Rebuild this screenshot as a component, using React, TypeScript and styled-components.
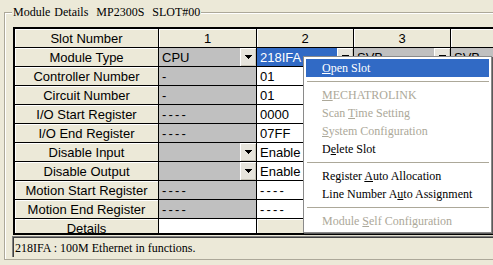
import React from 'react';
import styled, { createGlobalStyle } from 'styled-components';

const GlobalStyle = createGlobalStyle`
  html, body { margin: 0; padding: 0; background: #ECE9D8; overflow: hidden; }
  #root { width: 493px; height: 265px; }
`;

const Page = styled.div`
  position: relative;
  width: 493px;
  height: 265px;
  overflow: hidden;
  background: #ECE9D8;
  padding-top: 5px;
  box-sizing: border-box;
`;

const GroupBox = styled.fieldset`
  margin: 0 0 0 4px;
  padding: 0 0 2px 7px;
  width: 560px;
  min-width: 0;
  border: 1px solid #ACA899;
  box-shadow: inset 1px 1px 0 #fff;
  box-sizing: border-box;
`;

const Legend = styled.legend`
  padding: 0 1px;
  font-family: 'Liberation Serif', serif;
  font-size: 12px;
  line-height: 14px;
  white-space: pre;
  word-spacing: 1px;
  color: #000;
  background: #ECE9D8;
`;

const Viewport = styled.div`
  margin: 8px 0 0 1px;
  height: 205px;
  overflow: hidden;
  border-top: 1px solid #000;
  border-left: 1px solid #000;
  border-bottom: 2px solid #000;
`;

const Grid = styled.div`
  display: grid;
  grid-template-columns: 143px 97px 96px 96px 96px;
  grid-auto-rows: 18px;
  gap: 1px;
  padding: 1px;
  background: #000;
  width: max-content;
  font-family: 'Liberation Sans', Arial, sans-serif;
  font-size: 13px;
  color: #000;
`;

const LabelCell = styled.div`
  background: #ECE9D8;
  box-shadow: inset 1px 1px 0 #fff;
  text-align: center;
  line-height: 19px;
  white-space: nowrap;
  overflow: hidden;
`;

type Tone = 'grey' | 'white' | 'button';

const DataCell = styled.div<{ $tone: Tone }>`
  display: flex;
  overflow: hidden;
  background: ${(p) => (p.$tone === 'grey' ? '#C0C0C0' : p.$tone === 'white' ? '#FFFFFF' : '#ECE9D8')};
  box-shadow: ${(p) => (p.$tone === 'button' ? 'inset 1px 1px 0 #fff' : 'none')};
  justify-content: ${(p) => (p.$tone === 'button' ? 'center' : 'flex-start')};
`;

const CellText = styled.div<{ $selected?: boolean; $dashes?: boolean }>`
  flex: 1;
  padding-left: 3px;
  line-height: 19px;
  white-space: nowrap;
  overflow: hidden;
  letter-spacing: ${(p) => (p.$dashes ? '2.2px' : '0')};
  background: ${(p) => (p.$selected ? '#316AC5' : 'transparent')};
  color: ${(p) => (p.$selected ? '#fff' : '#000')};
`;

const CenterText = styled.div`
  line-height: 19px;
  white-space: nowrap;
  text-align: center;
  flex: 1;
`;

const DropButton = styled.div`
  width: 16px;
  flex: none;
  background: #E6E4DC;
  box-shadow: inset 1px 1px 0 #fff, inset -1px -1px 0 #C8C5B8;
  display: flex;
  align-items: center;
  justify-content: center;
`;

const Arrow = () => (
  <svg width="7" height="4" viewBox="0 0 7 4" shapeRendering="crispEdges">
    <path d="M0 0h7v1H0z M1 1h5v1H1z M2 2h3v1H2z M3 3h1v1H3z" fill="#000" />
  </svg>
);

const StatusBox = styled.div`
  margin-top: 1px;
  height: 21px;
  box-sizing: border-box;
  border-top: 1px solid #808080;
  border-left: 1px solid #808080;
  box-shadow: inset 1px 1px 0 #404040;
  padding: 4px 0 0 2px;
  font-family: 'Liberation Serif', serif;
  font-size: 12px;
  line-height: 14px;
  white-space: nowrap;
  color: #000;
`;

const Menu = styled.div`
  position: absolute;
  left: 303px;
  top: 56px;
  width: 189px;
  box-sizing: border-box;
  padding: 2px;
  background: #fff;
  border: 1px solid #8A8A8A;
  box-shadow: 1px 1px 0 #5A5A5A, 2px 2px 1px rgba(0, 0, 0, 0.25);
  font-family: 'Liberation Serif', serif;
  font-size: 12px;
`;

const MenuItem = styled.div<{ $active?: boolean; $disabled?: boolean }>`
  height: 18px;
  line-height: 18px;
  padding-left: 16px;
  white-space: nowrap;
  background: ${(p) => (p.$active ? '#316AC5' : 'transparent')};
  color: ${(p) => (p.$active ? '#fff' : p.$disabled ? '#ACA899' : '#000')};
`;

const Separator = styled.div`
  height: 9px;
  display: flex;
  align-items: center;
  padding-left: 1px;
  &::after {
    content: '';
    flex: 1;
    height: 1px;
    background: #ACA899;
  }
`;

type Cell =
  | { t: 'text'; tone: Tone; text?: string; drop?: boolean; selected?: boolean; dashes?: boolean }
  | { t: 'center'; tone: Tone; text: string };

const g = (text?: string, extra: Partial<{ drop: boolean; dashes: boolean }> = {}): Cell => ({
  t: 'text',
  tone: 'grey',
  text,
  ...extra,
});
const w = (text?: string, extra: Partial<{ drop: boolean; dashes: boolean; selected: boolean }> = {}): Cell => ({
  t: 'text',
  tone: 'white',
  text,
  ...extra,
});
const b = (text: string): Cell => ({ t: 'center', tone: 'button', text });

/* columns 3 and 4 lie under the pop-up menu from the third row on */
const rows: { label: string; cells: Cell[] }[] = [
  { label: 'Slot Number', cells: [b('1'), b('2'), b('3'), b('')] },
  {
    label: 'Module Type',
    cells: [g('CPU', { drop: true }), w('218IFA', { drop: true, selected: true }), g('SVB', { drop: true }), g('SVB', { drop: true })],
  },
  { label: 'Controller Number', cells: [g('-'), w('01'), g(), g()] },
  { label: 'Circuit Number', cells: [g('-'), w('01'), g(), g()] },
  { label: 'I/O Start Register', cells: [g('----', { dashes: true }), w('0000'), g(), g()] },
  { label: 'I/O End Register', cells: [g('----', { dashes: true }), w('07FF'), g(), g()] },
  { label: 'Disable Input', cells: [g('', { drop: true }), w('Enable', { drop: true }), g(), g()] },
  { label: 'Disable Output', cells: [g('', { drop: true }), w('Enable', { drop: true }), g(), g()] },
  { label: 'Motion Start Register', cells: [g('----', { dashes: true }), w('----', { dashes: true }), g(), g()] },
  { label: 'Motion End Register', cells: [g('----', { dashes: true }), w('----', { dashes: true }), g(), g()] },
  { label: 'Details', cells: [w(''), b(''), b('MECHATROLINK'), b('')] },
];

type MenuEntry = { sep: true } | { sep?: false; label: string; u: number; disabled?: boolean; active?: boolean };

const menu: MenuEntry[] = [
  { label: 'Open Slot', u: 0, active: true },
  { sep: true },
  { label: 'MECHATROLINK', u: 0, disabled: true },
  { label: 'Scan Time Setting', u: 5, disabled: true },
  { label: 'System Configuration', u: 0, disabled: true },
  { label: 'Delete Slot', u: 1 },
  { sep: true },
  { label: 'Register Auto Allocation', u: 9 },
  { label: 'Line Number Auto Assignment', u: 13 },
  { sep: true },
  { label: 'Module Self Configuration', u: 7, disabled: true },
];

const Mnemonic = ({ label, u }: { label: string; u: number }) => (
  <>
    {label.slice(0, u)}
    <u>{label[u]}</u>
    {label.slice(u + 1)}
  </>
);

const renderCell = (c: Cell, key: string) => {
  if (c.t === 'center') {
    return (
      <DataCell key={key} $tone={c.tone}>
        <CenterText>{c.text}</CenterText>
      </DataCell>
    );
  }
  return (
    <DataCell key={key} $tone={c.tone}>
      <CellText $selected={c.selected} $dashes={c.dashes}>
        {c.text}
      </CellText>
      {c.drop && (
        <DropButton>
          <Arrow />
        </DropButton>
      )}
    </DataCell>
  );
};

export default function App() {
  return (
    <Page>
      <GlobalStyle />
      <GroupBox>
        <Legend>{'Module Details  MP2300S  SLOT#00'}</Legend>
        <Viewport>
          <Grid>
            {rows.map((r, i) => (
              <React.Fragment key={r.label}>
                <LabelCell>{r.label}</LabelCell>
                {r.cells.map((c, j) => renderCell(c, `${i}-${j}`))}
              </React.Fragment>
            ))}
          </Grid>
        </Viewport>
        <StatusBox>218IFA : 100M Ethernet in functions.</StatusBox>
      </GroupBox>
      <Menu>
        {menu.map((m, i) =>
          m.sep ? (
            <Separator key={i} />
          ) : (
            <MenuItem key={i} $active={m.active} $disabled={m.disabled}>
              <Mnemonic label={m.label} u={m.u} />
            </MenuItem>
          )
        )}
      </Menu>
    </Page>
  );
}
